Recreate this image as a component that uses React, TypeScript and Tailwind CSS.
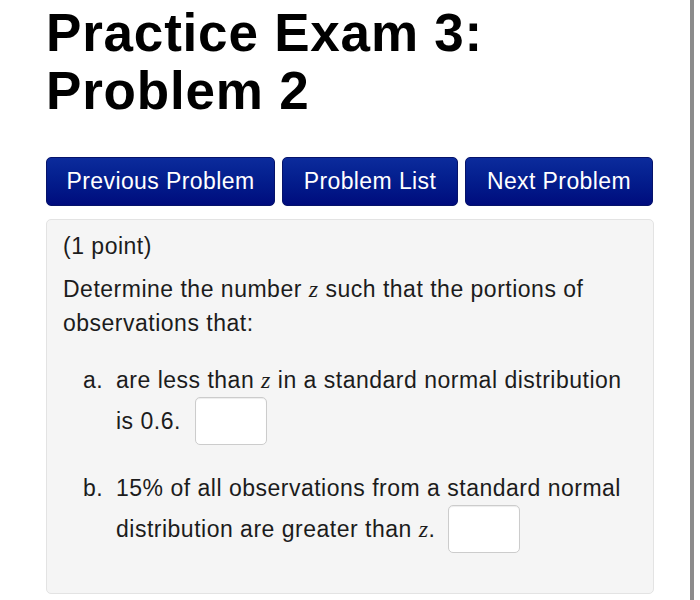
import React from "react";

const navButtons = [
  { label: "Previous Problem", width: "w-[229px]" },
  { label: "Problem List", width: "w-[176px]" },
  { label: "Next Problem", width: "w-[188px]" },
];

function Z() {
  return <span className="font-['Liberation_Serif',serif] italic text-[24px]">z</span>;
}

function AnswerBox() {
  return (
    <span className="inline-block w-[72px] h-[48px] bg-white border border-[#cccccc] rounded-[5px] shadow-[inset_0_1px_1px_rgba(0,0,0,0.075)]" />
  );
}

export default function App() {
  return (
    <div className="w-[700px] h-[600px] bg-white flex font-['Liberation_Sans',Arial,sans-serif] text-[#1c1c1c] overflow-hidden">
      <div className="w-[690px] shrink-0 pl-[46px] pr-[36px]">
        <h1 className="mt-[4px] text-[53px] leading-[58px] font-bold text-black tracking-[0.8px]">
          Practice Exam 3:
          <br />
          Problem 2
        </h1>

        <div className="mt-[37px] flex gap-[7px]">
          {navButtons.map((b) => (
            <button
              key={b.label}
              className={`${b.width} h-[49px] rounded-[5px] border border-[#06136a] bg-gradient-to-b from-[#0c2b9c] to-[#000b7d] text-white text-[23px] tracking-[0.4px] flex items-center justify-center`}
            >
              {b.label}
            </button>
          ))}
        </div>

        <div className="mt-[13px] w-[608px] h-[375px] bg-[#f5f5f5] border border-[#e3e3e3] rounded-[5px] pl-[16px] pt-[9px] text-[23px] tracking-[0.5px] leading-[34px]">
          <p>(1 point)</p>
          <p className="mt-[9px]">
            Determine the number <Z /> such that the portions of
            <br />
            observations that:
          </p>

          <ol className="mt-[23px] flex flex-col gap-[26px]">
            <li className="flex">
              <span className="w-[53px] pl-[20px] shrink-0">a.</span>
              <div>
                <div>
                  are less than <Z /> in a standard normal distribution
                </div>
                <div className="flex items-center gap-[14px]">
                  <span>is 0.6.</span>
                  <AnswerBox />
                </div>
              </div>
            </li>
            <li className="flex">
              <span className="w-[53px] pl-[20px] shrink-0">b.</span>
              <div>
                <div>15% of all observations from a standard normal</div>
                <div className="flex items-center gap-[13px]">
                  <span>
                    distribution are greater than <Z />.
                  </span>
                  <AnswerBox />
                </div>
              </div>
            </li>
          </ol>
        </div>
      </div>
      <div className="w-[4px] h-full bg-[#8c8c8c] shrink-0" />
    </div>
  );
}
